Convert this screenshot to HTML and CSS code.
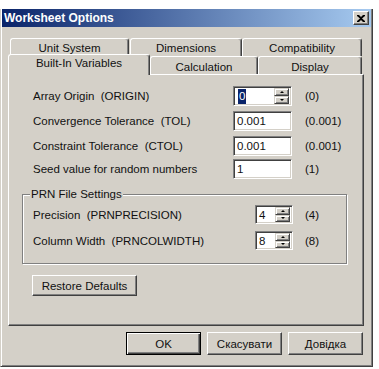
FILE: index.html
```html
<!DOCTYPE html>
<html lang="en">
<head>
    <meta charset="UTF-8">
    <title>Worksheet Options</title>
    <link rel="stylesheet" href="styles.css">
</head>
<body>
    <div class="window">
        <div class="titlebar">
            <span class="title">Worksheet Options</span>
            <div class="close">
                <svg width="8" height="7" viewBox="0 0 8 7">
                    <path d="M0 0h2l2 2 2-2h2v1L5 3.5 8 6v1H6L4 5 2 7H0V6l3-2.5L0 1z" fill="#000"/>
                </svg>
            </div>
        </div>

        <div class="content">
            <div class="tabs">
                <div class="tab-row back">
                    <div class="tab w-unit">Unit System</div>
                    <div class="tab w-dim">Dimensions</div>
                    <div class="tab w-compat">Compatibility</div>
                </div>
                <div class="tab-row front">
                    <div class="tab active w-builtin">Built-In Variables</div>
                    <div class="tab w-calc">Calculation</div>
                    <div class="tab w-display">Display</div>
                </div>
            </div>

            <div class="panel">
                <div class="row">
                    <span class="label">Array Origin&nbsp; (ORIGIN)</span>
                    <div class="field wide">
                        <span class="selected">0</span>
                        <div class="spin">
                            <div class="spin-btn"><i class="up"></i></div>
                            <div class="spin-btn"><i class="down"></i></div>
                        </div>
                    </div>
                    <span class="default">(0)</span>
                </div>
                <div class="row">
                    <span class="label">Convergence Tolerance&nbsp; (TOL)</span>
                    <div class="field wide">0.001</div>
                    <span class="default">(0.001)</span>
                </div>
                <div class="row">
                    <span class="label">Constraint Tolerance&nbsp; (CTOL)</span>
                    <div class="field wide">0.001</div>
                    <span class="default">(0.001)</span>
                </div>
                <div class="row seed">
                    <span class="label">Seed value for random numbers</span>
                    <div class="field wide">1</div>
                    <span class="default">(1)</span>
                </div>

                <div class="group">
                    <span class="group-title">PRN File Settings</span>
                    <div class="group-row">
                        <span class="label long">Precision&nbsp; (PRNPRECISION)</span>
                        <div class="field narrow">
                            4
                            <div class="spin">
                                <div class="spin-btn"><i class="up"></i></div>
                                <div class="spin-btn"><i class="down"></i></div>
                            </div>
                        </div>
                        <span class="default">(4)</span>
                    </div>
                    <div class="group-row">
                        <span class="label long">Column Width&nbsp; (PRNCOLWIDTH)</span>
                        <div class="field narrow">
                            8
                            <div class="spin">
                                <div class="spin-btn"><i class="up"></i></div>
                                <div class="spin-btn"><i class="down"></i></div>
                            </div>
                        </div>
                        <span class="default">(8)</span>
                    </div>
                </div>

                <button class="btn restore">Restore Defaults</button>
            </div>

            <div class="actions">
                <button class="btn default-btn">OK</button>
                <button class="btn">Скасувати</button>
                <button class="btn">Довідка</button>
            </div>
        </div>
    </div>
</body>
</html>
```

FILE: styles.css
```css
body {
    margin: 0;
    background: #fff;
    font-family: "Liberation Sans", Arial, sans-serif;
    font-size: 11.5px;
    color: #111;
}
.window {
    width: 373px;
    height: 358px;
    margin-top: 9px;
    box-sizing: border-box;
    background: #d4d0c8;
    border: 1px solid;
    border-top: 0;
    border-color: #d4d0c8 #404040 #404040 #d4d0c8;
    box-shadow: inset 1px 0 #fff, inset -1px -1px #808080;
    padding: 0 1px 1px 1px;
}
.titlebar {
    height: 18px;
    display: flex;
    align-items: center;
    justify-content: space-between;
    background: linear-gradient(to right, #0a246a, #a6caf0);
    padding: 0 2px 0 2px;
}
.title {
    color: #fff;
    font-weight: bold;
    font-size: 12px;
}
.close {
    width: 16px;
    height: 14px;
    box-sizing: border-box;
    background: #d4d0c8;
    border: 1px solid;
    border-color: #fff #404040 #404040 #fff;
    box-shadow: inset -1px -1px #808080;
    display: flex;
    align-items: center;
    justify-content: center;
}
.content {
    padding: 11px 0 0 6px;
}

/* tabs */
.tab-row {
    display: flex;
    height: 18px;
}
.tab-row.back {
    padding-left: 2px;
}
.tab-row.front {
    align-items: flex-end;
    position: relative;
    z-index: 1;
}
.tab {
    flex: none;
    height: 18px;
    box-sizing: border-box;
    border: 1px solid;
    border-bottom: 0;
    border-color: #fff #404040 #fff #fff;
    border-radius: 3px 3px 0 0;
    box-shadow: inset -1px 0 #808080;
    display: flex;
    align-items: center;
    justify-content: center;
    padding-top: 1px;
}
.tab.active {
    height: 21px;
    margin-bottom: -1px;
    margin-top: -2px;
    background: #d4d0c8;
    padding-bottom: 5px;
}
.w-unit { width: 119px; }
.w-dim { width: 112px; margin-left: 1px; }
.w-compat { width: 120px; }
.w-builtin { width: 142px; }
.w-calc { width: 108px; padding-top: 3px; }
.w-display { width: 104px; padding-top: 3px; }

/* panel */
.panel {
    width: 356px;
    height: 252px;
    box-sizing: border-box;
    border: 1px solid;
    border-color: #fff #404040 #404040 #fff;
    box-shadow: inset -1px -1px #808080;
    padding: 11px 0 0 13px;
}
.row {
    display: flex;
    align-items: center;
    height: 20px;
    margin-bottom: 5px;
    padding-left: 11px;
}
.row.seed {
    margin-top: -2px;
}
.label {
    width: 200px;
    flex: none;
}
.label.long {
    width: 222px;
}
.field {
    flex: none;
    height: 20px;
    box-sizing: border-box;
    background: #fff;
    border: 1px solid;
    border-color: #808080 #fff #fff #808080;
    box-shadow: inset 1px 1px #404040, inset -1px -1px #d4d0c8;
    padding: 0 2px 0 3px;
    display: flex;
    align-items: center;
    position: relative;
}
.field.wide {
    width: 59px;
}
.field.narrow {
    width: 38px;
    height: 19px;
}
.selected {
    background: #0a246a;
    color: #fff;
    padding: 1px 1px;
    line-height: 13px;
    margin-left: 1px;
}
.spin {
    margin-left: auto;
    display: flex;
    flex-direction: column;
    width: 15px;
    height: 16px;
}
.field.narrow .spin {
    height: 15px;
}
.spin-btn {
    flex: 1;
    box-sizing: border-box;
    border: 1px solid;
    border-color: #d4d0c8 #404040 #404040 #d4d0c8;
    box-shadow: inset 1px 1px #fff, inset -1px -1px #808080;
    background: #d4d0c8;
    display: flex;
    align-items: center;
    justify-content: center;
}
.spin-btn i {
    width: 0;
    height: 0;
    border-left: 2px solid transparent;
    border-right: 2px solid transparent;
}
.spin-btn i.up {
    border-bottom: 2px solid #000;
}
.spin-btn i.down {
    border-top: 2px solid #000;
}
.default {
    margin-left: 13px;
}
.group-row .default {
    margin-left: 12px;
}

/* group box */
.group {
    width: 325px;
    height: 70px;
    box-sizing: border-box;
    margin-top: 15px;
    border: 1px solid #808080;
    box-shadow: inset 1px 1px #fff, 1px 1px #fff;
    padding: 0 0 0 10px;
}
.group-title {
    display: inline-block;
    background: #d4d0c8;
    margin: -7px 0 0 -3px;
    padding: 0 1px;
    line-height: 13px;
    vertical-align: top;
}
.group-row {
    display: flex;
    align-items: center;
    height: 19px;
}
.group-title + .group-row {
    margin-top: -2px;
}
.group-row + .group-row {
    margin-top: 7px;
}

/* buttons */
.btn {
    font-family: inherit;
    font-size: 11.5px;
    color: #111;
    background: #d4d0c8;
    box-sizing: border-box;
    border: 1px solid;
    border-color: #fff #404040 #404040 #fff;
    box-shadow: inset -1px -1px #808080;
    padding: 0;
    height: 23px;
    width: 75px;
}
.btn.restore {
    display: block;
    width: 105px;
    height: 21px;
    margin: 11px 0 0 10px;
}
.btn.default-btn {
    border: 1px solid #000;
    box-shadow: inset 1px 1px #fff, inset -1px -1px #404040, inset -2px -2px #808080;
}
.actions {
    display: flex;
    justify-content: flex-end;
    gap: 6px;
    width: 355px;
    margin-top: 6px;
}
```
